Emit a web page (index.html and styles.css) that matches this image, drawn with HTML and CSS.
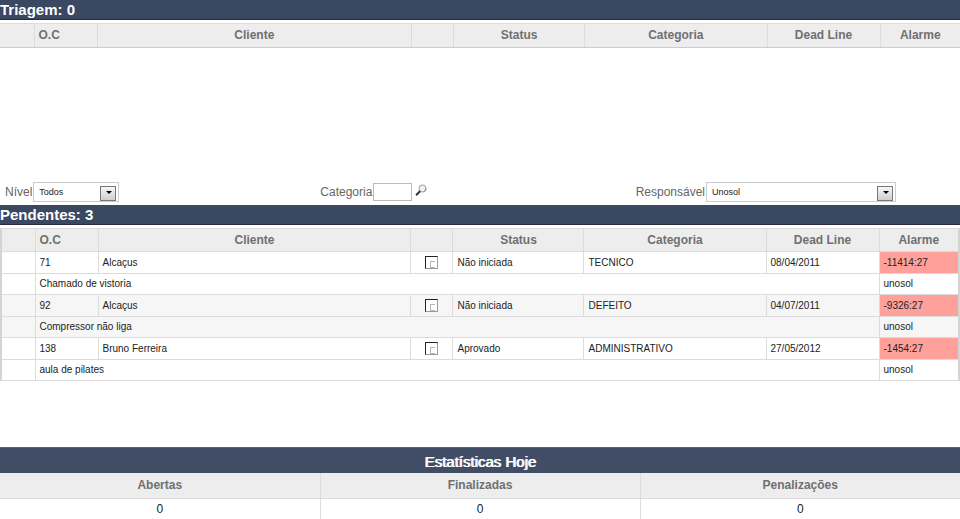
FILE: index.html
```
<!DOCTYPE html>
<html lang="pt-br">

<head>
    <meta charset="UTF-8">
    <meta name="viewport" content="width=device-width, initial-scale=1.0">
    <title>Chamados</title>
    <link rel="stylesheet" href="styles.css">
</head>

<body>

    <!-- Triagem -->
    <section class="triagem">
        <h2 class="titulo">Triagem: 0</h2>
        <table class="lista lista_vazia">
            <colgroup>
                <col class="c_marca"><col class="c_oc"><col class="c_cliente"><col class="c_check">
                <col class="c_status"><col class="c_categoria"><col class="c_dead"><col class="c_alarme">
            </colgroup>
            <thead>
                <tr>
                    <th></th>
                    <th class="esq">O.C</th>
                    <th>Cliente</th>
                    <th></th>
                    <th>Status</th>
                    <th>Categoria</th>
                    <th>Dead Line</th>
                    <th>Alarme</th>
                </tr>
            </thead>
        </table>
    </section>

    <!-- Filtros -->
    <form class="filtros">
        <div class="campo">
            <label for="nivel">Nível</label>
            <span class="combo combo_nivel">
                <select id="nivel">
                    <option>Todos</option>
                </select>
            </span>
        </div>
        <div class="campo">
            <label for="categoria">Categoria</label>
            <input type="text" id="categoria">
            <button type="button" class="lupa" aria-label="Buscar categoria">
                <svg width="12" height="13" viewBox="0 0 12 13">
                    <circle cx="7.5" cy="4.5" r="3.4" fill="#f4f4f4" stroke="#b4b4b4" stroke-width="1.2" />
                    <path d="M8.8 7.6A3.4 3.4 0 0 0 10.8 4" fill="none" stroke="#888" stroke-width="1" />
                    <path d="M5.2 7L1.1 11.2" stroke="#333" stroke-width="2" />
                </svg>
            </button>
        </div>
        <div class="campo">
            <label for="responsavel">Responsável</label>
            <span class="combo combo_resp">
                <select id="responsavel">
                    <option>Unosol</option>
                </select>
            </span>
        </div>
    </form>

    <!-- Pendentes -->
    <section class="pendentes">
        <h2 class="titulo">Pendentes: 3</h2>
        <table class="lista lista_borda">
            <colgroup>
                <col class="c_marca"><col class="c_oc"><col class="c_cliente"><col class="c_check">
                <col class="c_status"><col class="c_categoria"><col class="c_dead"><col class="c_alarme">
            </colgroup>
            <thead>
                <tr>
                    <th></th>
                    <th class="esq">O.C</th>
                    <th>Cliente</th>
                    <th></th>
                    <th>Status</th>
                    <th>Categoria</th>
                    <th>Dead Line</th>
                    <th>Alarme</th>
                </tr>
            </thead>
            <tbody>
                <tr class="chamado">
                    <td></td>
                    <td>71</td>
                    <td>Alcaçus</td>
                    <td class="check"><input type="checkbox" aria-label="Chamado 71"></td>
                    <td>Não iniciada</td>
                    <td>TECNICO</td>
                    <td>08/04/2011</td>
                    <td class="atrasado">-11414:27</td>
                </tr>
                <tr class="detalhe">
                    <td></td>
                    <td colspan="6">Chamado de vistoria</td>
                    <td>unosol</td>
                </tr>
            </tbody>
            <tbody class="par">
                <tr class="chamado">
                    <td></td>
                    <td>92</td>
                    <td>Alcaçus</td>
                    <td class="check"><input type="checkbox" aria-label="Chamado 92"></td>
                    <td>Não iniciada</td>
                    <td>DEFEITO</td>
                    <td>04/07/2011</td>
                    <td class="atrasado">-9326:27</td>
                </tr>
                <tr class="detalhe">
                    <td></td>
                    <td colspan="6">Compressor não liga</td>
                    <td>unosol</td>
                </tr>
            </tbody>
            <tbody>
                <tr class="chamado">
                    <td></td>
                    <td>138</td>
                    <td>Bruno Ferreira</td>
                    <td class="check"><input type="checkbox" aria-label="Chamado 138"></td>
                    <td>Aprovado</td>
                    <td>ADMINISTRATIVO</td>
                    <td>27/05/2012</td>
                    <td class="atrasado">-1454:27</td>
                </tr>
                <tr class="detalhe">
                    <td></td>
                    <td colspan="6">aula de pilates</td>
                    <td>unosol</td>
                </tr>
            </tbody>
        </table>
    </section>

    <!-- Estatisticas -->
    <section class="estatisticas">
        <h2 class="titulo_est">Estatísticas Hoje</h2>
        <table class="resumo">
            <thead>
                <tr>
                    <th>Abertas</th>
                    <th>Finalizadas</th>
                    <th>Penalizações</th>
                </tr>
            </thead>
            <tbody>
                <tr>
                    <td>0</td>
                    <td>0</td>
                    <td>0</td>
                </tr>
            </tbody>
        </table>
    </section>

</body>

</html>
```
FILE: styles.css
```
* {
    box-sizing: border-box;
}

body {
    margin: 0;
    background-color: #fff;
    color: #222;
    font-family: "Liberation Sans", Arial, sans-serif;
    font-size: 12px;
}

.titulo {
    margin: 0 0 3px;
    height: 20px;
    line-height: 20px;
    font-size: 15px;
    font-weight: bold;
    color: #fff;
    background-color: #3a4862;
    border-bottom: 1px solid #262c3e;
}

.triagem {
    min-height: 181px;
}

.pendentes {
    min-height: 242px;
}

/* Tabelas de chamados */

.lista {
    width: 100%;
    table-layout: fixed;
    border-collapse: collapse;
    font-size: 10px;
}

.c_marca {
    width: 34px;
}

.c_oc {
    width: 63px;
}

.c_check {
    width: 42px;
}

.c_status {
    width: 131px;
}

.c_categoria {
    width: 19%;
}

.c_dead {
    width: 113px;
}

.c_alarme {
    width: 80px;
}

.lista th,
.lista td {
    padding: 0 4px;
    border: 1px solid #dcdcdc;
    text-align: left;
}

.lista th {
    height: 23px;
    font-size: 12px;
    color: #707070;
    background-color: #ededed;
    text-align: center;
}

.lista th.esq {
    text-align: left;
}

.lista_vazia th {
    height: 24px;
    padding-bottom: 2px;
    border-bottom-color: #ccc;
}

.lista_vazia th:first-child {
    border-left: none;
}

.lista_vazia th:last-child {
    border-right: none;
}

.lista_borda {
    border-left: 2px solid #d4d4d4;
    border-right: 2px solid #d4d4d4;
}

.chamado td {
    height: 22px;
}

.detalhe td {
    height: 21px;
}

.detalhe:last-child td {
    padding-bottom: 1px;
}

.par {
    background-color: #f6f6f6;
}

.lista td.atrasado {
    background-color: #ffa19a;
}

.lista td.check {
    text-align: center;
}

.check input {
    appearance: none;
    display: block;
    width: 13px;
    height: 13px;
    margin: 0 auto;
    padding: 4px;
    background-color: #fff;
    border: 1px solid #999;
    border-top-color: #222;
    border-left-color: #222;
}

.check input::before {
    content: "";
    display: block;
    width: 4px;
    height: 5px;
    border: 1px solid #b5b5b5;
    border-right: none;
}

.check input:checked::before {
    background-color: #222;
}

/* Filtros */

.filtros {
    display: grid;
    grid-template-columns: repeat(3, 1fr);
    height: 24px;
    padding: 0 9px 0 5px;
    color: #666;
}

.campo {
    display: flex;
    align-items: center;
    gap: 1px;
    height: 22px;
}

.combo {
    position: relative;
    height: 20px;
}

.combo_nivel {
    width: 86px;
}

.combo_resp {
    width: 190px;
}

.combo select {
    appearance: none;
    width: 100%;
    height: 20px;
    padding: 0 5px;
    font-family: inherit;
    font-size: 9px;
    color: #222;
    background-color: #fff;
    border: 1px solid #ccc;
    border-radius: 0;
}

/* botao da seta */
.combo::before {
    content: "";
    position: absolute;
    top: 4px;
    right: 3px;
    width: 14px;
    height: 13px;
    background: linear-gradient(#f6f6f6, #cfcfcf);
    border: 1px solid #777;
    pointer-events: none;
}

.combo::after {
    content: "";
    position: absolute;
    top: 9px;
    right: 7px;
    border: 3px solid transparent;
    border-top-color: #000;
    border-bottom: none;
    pointer-events: none;
}

.campo input {
    width: 39px;
    height: 18px;
    padding: 0 2px;
    font-family: inherit;
    font-size: 10px;
    border: 1px solid #bbb;
}

.lupa {
    display: flex;
    padding: 0 2px;
    margin-bottom: 3px;
    background: none;
    border: none;
}

/* Estatisticas */

.titulo_est {
    margin: 0;
    height: 26px;
    line-height: 28px;
    font-size: 15px;
    font-weight: normal;
    text-align: center;
    color: #fff;
    text-shadow: 1px 0 #fff;
    background-color: #414d65;
    border-top: 1px solid #59647a;
}

.resumo {
    width: 100%;
    table-layout: fixed;
    border-collapse: collapse;
}

.resumo th,
.resumo td {
    padding: 0;
    text-align: center;
    border-right: 1px solid #dcdcdc;
}

.resumo th:last-child,
.resumo td:last-child {
    border-right: none;
}

.resumo th {
    height: 25px;
    color: #707070;
    background-color: #ededed;
    border-bottom: 1px solid #dcdcdc;
}

.resumo td {
    height: 21px;
}
```
